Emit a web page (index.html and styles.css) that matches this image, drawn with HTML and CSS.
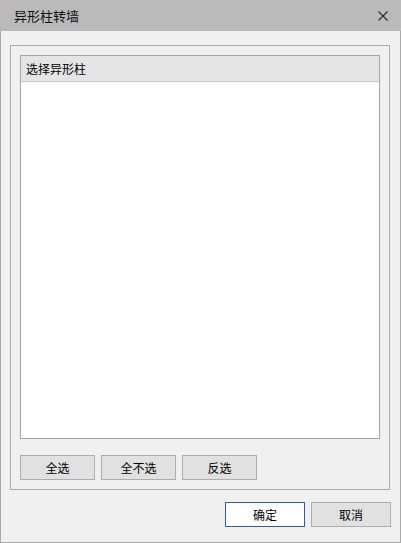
FILE: index.html
```html
<!DOCTYPE html>
<html>
<head>
<meta charset="utf-8">
<link rel="stylesheet" href="styles.css">
</head>
<body>
<div class="window">
  <div class="titlebar">
    <span class="title">异形柱转墙</span>
    <svg class="close" width="12" height="12" viewBox="0 0 12 12"><path d="M1.5 1.5 L10.5 10.5 M10.5 1.5 L1.5 10.5" stroke="#2b2b2b" stroke-width="1.1" fill="none"/></svg>
  </div>
  <div class="content">
    <div class="group">
      <div class="list">
        <div class="list-header">选择异形柱</div>
      </div>
      <div class="sel-row">
        <button class="btn">全选</button>
        <button class="btn">全不选</button>
        <button class="btn">反选</button>
      </div>
    </div>
    <div class="footer">
      <button class="btn btn-wide btn-primary">确定</button>
      <button class="btn btn-wide">取消</button>
    </div>
  </div>
</div>
</body>
</html>
```
FILE: styles.css
```css
* { box-sizing: border-box; }
html, body { margin: 0; padding: 0; }
body {
  width: 401px;
  height: 543px;
  font-family: "Noto Sans CJK SC", "Microsoft YaHei", sans-serif;
  font-size: 12px;
  color: #000;
  background: #f0f0f0;
}
.window {
  width: 401px;
  height: 543px;
  display: flex;
  flex-direction: column;
  background: #f0f0f0;
}
.titlebar {
  height: 31px;
  flex: none;
  background: #bababa;
  display: flex;
  align-items: center;
  justify-content: space-between;
  padding: 0 12px 0 14px;
}
.title {
  font-size: 13px;
  color: #111;
  line-height: 31px;
}
.close { display: block; margin-top: 0; }
.content {
  flex: 1;
  border: 1px solid #aaaaaa;
  border-top: none;
  padding: 14px 9px 0 9px;
  display: flex;
  flex-direction: column;
}
.group {
  width: 380px;
  height: 445px;
  border: 1px solid #a9a9a9;
  padding: 9px 9px 9px 9px;
  display: flex;
  flex-direction: column;
}
.list {
  width: 360px;
  height: 384px;
  border: 1px solid #a5a5a5;
  background: #fff;
}
.list-header {
  height: 26px;
  background: #e5e5e5;
  border-bottom: 1px solid #c5c5c5;
  padding-left: 5px;
  line-height: 25px;
  font-size: 12px;
  margin-right: 0;
}
.sel-row {
  margin-top: 16px;
  display: flex;
  gap: 6px;
}
.btn {
  width: 75px;
  height: 25px;
  border: 1px solid #adadad;
  background: #e1e1e1;
  font-family: inherit;
  font-size: 12px;
  color: #000;
  padding: 0;
  margin: 0;
  line-height: 23px;
}
.footer {
  margin-top: 12px;
  display: flex;
  justify-content: flex-end;
  gap: 6px;
}
.btn-wide { width: 80px; height: 25px; }
.btn-primary {
  background: #fff;
  border-color: #2a5ea5;
}
```
